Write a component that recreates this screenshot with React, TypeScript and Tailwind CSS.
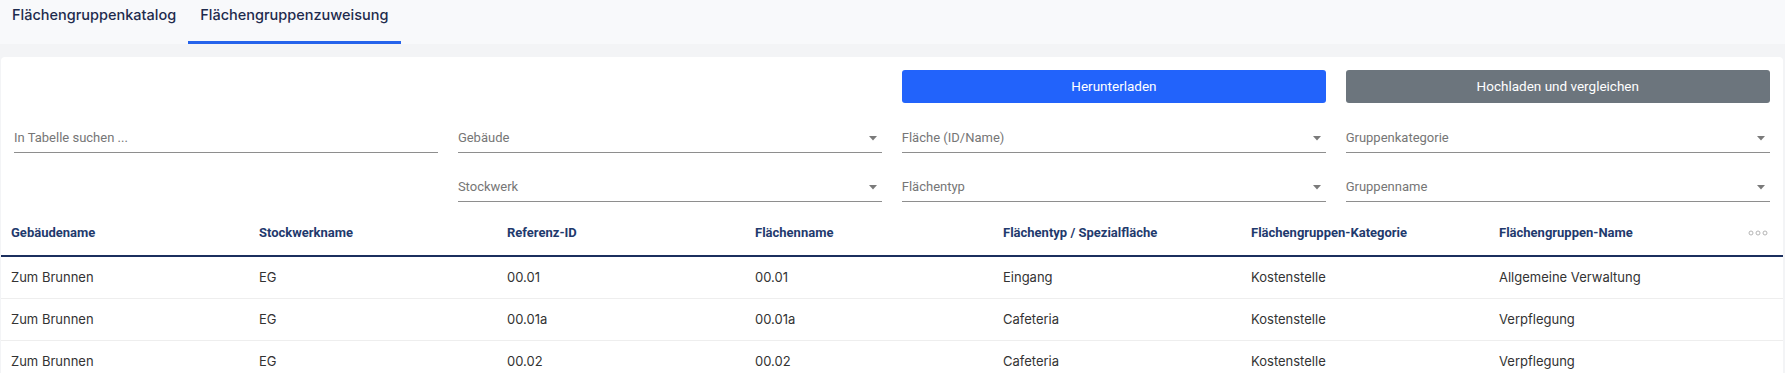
import React from "react";

const Arrow = () => (
  <svg width="8" height="5" viewBox="0 0 8 5" className="shrink-0">
    <path d="M0 0 L8 0 L4 4.5 Z" fill="#7a7a7a" />
  </svg>
);

const Field = ({ label, select = true }: { label: string; select?: boolean }) => (
  <div className="h-[34px] flex items-end justify-between pb-[6px] pr-[5px] border-b border-[#8e8e8e]">
    <span className="text-[13px] leading-[16px] text-[#767676]" style={{ fontFamily: "Roboto, sans-serif" }}>
      {label}
    </span>
    {select && (
      <span className="mb-[5px]">
        <Arrow />
      </span>
    )}
  </div>
);

const headers = [
  "Gebäudename",
  "Stockwerkname",
  "Referenz-ID",
  "Flächenname",
  "Flächentyp / Spezialfläche",
  "Flächengruppen-Kategorie",
  "Flächengruppen-Name",
];

const rows = [
  ["Zum Brunnen", "EG", "00.01", "00.01", "Eingang", "Kostenstelle", "Allgemeine Verwaltung"],
  ["Zum Brunnen", "EG", "00.01a", "00.01a", "Cafeteria", "Kostenstelle", "Verpflegung"],
  ["Zum Brunnen", "EG", "00.02", "00.02", "Cafeteria", "Kostenstelle", "Verpflegung"],
];

const Dots = () => (
  <svg width="20" height="6" viewBox="0 0 20 6">
    <circle cx="3" cy="3" r="2" fill="none" stroke="#b5b5b5" strokeWidth="1" />
    <circle cx="10" cy="3" r="2" fill="none" stroke="#b5b5b5" strokeWidth="1" />
    <circle cx="17" cy="3" r="2" fill="none" stroke="#b5b5b5" strokeWidth="1" />
  </svg>
);

export default function App() {
  return (
    <div className="w-full h-[373px] overflow-hidden bg-[#f3f4f6]" style={{ fontFamily: "Inter, sans-serif" }}>
      <div className="h-[44px] bg-[#f8f9fb] flex">
        <div className="px-3 pt-[5px] text-[14.5px] leading-[20px] font-medium text-[#1e2b4d] border-b-[3px] border-transparent">
          Flächengruppenkatalog
        </div>
        <div className="px-3 pt-[5px] text-[14.5px] leading-[20px] font-medium text-[#1e2b4d] border-b-[3px] border-[#2563eb]">
          Flächengruppenzuweisung
        </div>
      </div>
      <div className="mt-[13px] ml-[1px] mr-[2px] bg-white rounded-t-[4px] h-[400px]">
        <div className="px-[13px] pt-[13px]">
          <div className="grid grid-cols-4 gap-x-[19.5px]">
            <div />
            <div />
            <button
              className="h-[33px] rounded-[3px] bg-[#2263fb] text-white text-[13.5px]"
              style={{ fontFamily: "Roboto, sans-serif" }}
            >
              Herunterladen
            </button>
            <button
              className="h-[33px] rounded-[3px] bg-[#6c757d] text-white text-[13.5px]"
              style={{ fontFamily: "Roboto, sans-serif" }}
            >
              Hochladen und vergleichen
            </button>
          </div>
          <div className="mt-[16px] grid grid-cols-4 gap-x-[19.5px] gap-y-[15px]">
            <Field label="In Tabelle suchen ..." select={false} />
            <Field label="Gebäude" />
            <Field label="Fläche (ID/Name)" />
            <Field label="Gruppenkategorie" />
            <div />
            <Field label="Stockwerk" />
            <Field label="Flächentyp" />
            <Field label="Gruppenname" />
          </div>
        </div>
        <div className="mt-[10px]">
          <div className="grid grid-cols-[repeat(7,248px)_1fr] h-[45px] items-center border-b-2 border-[#1b2f5e] pb-[2px]">
            {headers.map((h) => (
              <div
                key={h}
                className="pl-[10px] text-[13px] font-bold text-[#1f3a6d]"
                style={{ fontFamily: "Roboto, sans-serif" }}
              >
                {h}
              </div>
            ))}
            <div className="flex justify-start pl-[11px]">
              <Dots />
            </div>
          </div>
          {rows.map((r, i) => (
            <div
              key={i}
              className="grid grid-cols-[repeat(7,248px)_1fr] h-[42px] items-center border-b border-[#eeeeee]"
            >
              {r.map((c, j) => (
                <div key={j} className="pl-[10px] text-[13px] text-[#333333]">
                  {c}
                </div>
              ))}
              <div />
            </div>
          ))}
        </div>
      </div>
    </div>
  );
}
